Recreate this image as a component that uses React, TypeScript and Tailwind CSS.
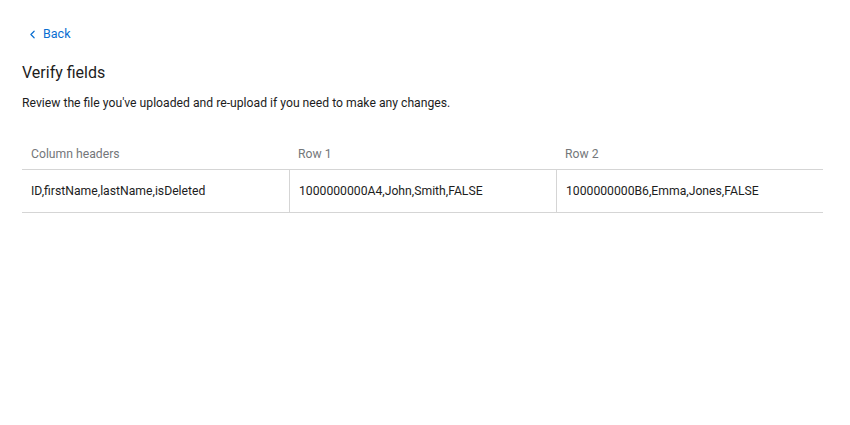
import { ChevronLeft } from 'lucide-react'

const headers = ['Column headers', 'Row 1', 'Row 2']
const values = [
  'ID,firstName,lastName,isDeleted',
  '1000000000A4,John,Smith,FALSE',
  '1000000000B6,Emma,Jones,FALSE',
]

export default function App() {
  return (
    <div className="min-h-[425px] bg-white px-[22px] pt-[25px] text-[#1d1d1d] [font-family:Roboto,'Liberation_Sans',Arial,sans-serif]">
      {/* Back link */}
      <button className="flex h-[18px] items-center gap-[4px] pl-[4px] text-[12.5px] text-[#0a6ed1]">
        <ChevronLeft className="h-[13px] w-[13px]" strokeWidth={2.2} />
        <span>Back</span>
      </button>

      <h1 className="mt-[19px] text-[16px] leading-[22px]">Verify fields</h1>
      <p className="mt-[10px] text-[12.2px] leading-[18px]">
        Review the file you've uploaded and re-upload if you need to make any changes.
      </p>

      {/* Preview table */}
      <div className="mt-[28px] w-[801px]">
        <div className="grid grid-cols-3 border-b border-[#d5d5d5]">
          {headers.map(h => (
            <div key={h} className="h-[29px] px-[9px] pt-[1px] text-[12.2px] leading-[26px] text-[#74777a]">
              {h}
            </div>
          ))}
        </div>
        <div className="grid grid-cols-3 border-b border-[#d5d5d5]">
          {values.map((v, i) => (
            <div
              key={v}
              className={`h-[42px] px-[9px] text-[12.2px] leading-[42px] ${i > 0 ? 'border-l border-[#d5d5d5]' : ''}`}
            >
              {v}
            </div>
          ))}
        </div>
      </div>
    </div>
  )
}
